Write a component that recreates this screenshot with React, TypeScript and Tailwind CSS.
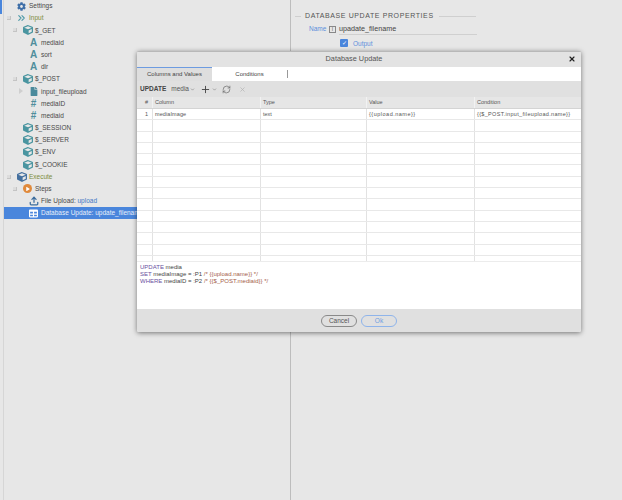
import { ChevronsRight, Plus, RefreshCw, X, ChevronDown } from "lucide-react";
import { FaCog, FaCube, FaFile, FaTable, FaPlay } from "react-icons/fa";
import { FiUpload } from "react-icons/fi";

type Row = {
  label: string;
  extra?: string;
  indent: number;
  icon: string;
  arrow?: "open" | "closed";
  color?: string;
  selected?: boolean;
};

const rows: Row[] = [
  { label: "Settings", indent: 12, icon: "cog" },
  { label: "Input", indent: 12, icon: "input", arrow: "open", color: "text-[#7d8c3c]" },
  { label: "$_GET", indent: 18, icon: "cube", arrow: "open" },
  { label: "mediaid", indent: 24, icon: "A" },
  { label: "sort", indent: 24, icon: "A" },
  { label: "dir", indent: 24, icon: "A" },
  { label: "$_POST", indent: 18, icon: "cube", arrow: "open" },
  { label: "input_fileupload", indent: 24, icon: "file", arrow: "closed" },
  { label: "mediaID", indent: 24, icon: "#" },
  { label: "mediaid", indent: 24, icon: "#" },
  { label: "$_SESSION", indent: 18, icon: "cube" },
  { label: "$_SERVER", indent: 18, icon: "cube" },
  { label: "$_ENV", indent: 18, icon: "cube" },
  { label: "$_COOKIE", indent: 18, icon: "cube" },
  { label: "Execute", indent: 12, icon: "exec", arrow: "open", color: "text-[#7d8c3c]" },
  { label: "Steps", indent: 18, icon: "steps", arrow: "open" },
  { label: "File Upload: ", extra: "upload", indent: 24, icon: "upload" },
  { label: "Database Update: update_filename", indent: 24, icon: "table", selected: true },
];

function RowIcon({ name, selected }: { name: string; selected?: boolean }) {
  if (name === "cog") return <FaCog className="w-[9px] h-[9px] text-[#3f6fa8]" />;
  if (name === "input") return <ChevronsRight className="w-[12px] h-[12px] text-[#4f9aa8]" strokeWidth={2.4} />;
  if (name === "cube") return <FaCube className="w-[10px] h-[10px] text-[#4a95a0]" />;
  if (name === "exec") return <FaCube className="w-[10px] h-[10px] text-[#44709f]" />;
  if (name === "A") return <span className="text-[10px] leading-none font-bold text-[#4f8e9c]">A</span>;
  if (name === "#") return <span className="text-[10px] leading-none font-bold text-[#4f8e9c]">#</span>;
  if (name === "file") return <FaFile className="w-[8px] h-[9px] text-[#4a8a9c]" />;
  if (name === "upload") return <FiUpload className="w-[10px] h-[10px] text-[#3d6e9e]" strokeWidth={3} />;
  if (name === "table") return <FaTable className={`w-[9px] h-[9px] ${selected ? "text-white" : "text-[#3d6e9e]"}`} />;
  return (
    <span className="w-[9px] h-[9px] rounded-full bg-[#e08a3c] flex items-center justify-center">
      <FaPlay className="w-[4px] h-[4px] text-white" />
    </span>
  );
}

function TreeRow({ row }: { row: Row }) {
  return (
    <div
      className={`h-[12.2px] flex items-center whitespace-nowrap overflow-hidden ${row.selected ? "bg-[#4a86dc] text-[#e8f0fb]" : "text-[#484848]"}`}
      style={{ paddingLeft: row.indent }}
    >
      <span className="w-[9px] -ml-[9px] -translate-x-[3px] flex justify-center shrink-0">
        {row.arrow === "open" && <span className="w-[4px] h-[4px] border-b border-r border-[#c4c4c4] bg-[#dcdcdc]" />}
        {row.arrow === "closed" && (
          <span className="w-0 h-0 border-y-[3px] border-y-transparent border-l-[4px] border-l-[#cfcfcf]" />
        )}
      </span>
      <span className="w-[11px] mr-[2px] shrink-0 flex items-center justify-center">
        <RowIcon name={row.icon} selected={row.selected} />
      </span>
      <span className={row.color}>{row.label}</span>
      {row.extra && <span className="text-[#3f78c4]">&nbsp;{row.extra}</span>}
    </div>
  );
}

const cols = ["w-[16px]", "w-[108px]", "w-[106px]", "w-[108px]", "flex-1"];
const tracking = ["", "tracking-[0.1px]", "", "tracking-[0.5px]", "tracking-[0.32px]"];

function GridRow({ cells }: { cells: string[] }) {
  return (
    <div className="h-[11.3px] flex border-b border-[#e8e8e8] bg-white">
      {cells.map((c, i) => (
        <div
          key={i}
          className={`${cols[i]} ${tracking[i]} border-r border-[#e2e2e2] last:border-r-0 flex items-center whitespace-nowrap overflow-hidden ${i === 0 ? "justify-end pr-[4px]" : "px-[2px]"}`}
        >
          {c}
        </div>
      ))}
    </div>
  );
}

function Dialog() {
  const empty = ["", "", "", "", ""];
  return (
    <div className="absolute left-[137px] top-[51px] w-[444px] h-[281px] flex flex-col bg-white rounded-[2px] border-t border-[#b8b8b8] shadow-[0_1px_5px_rgba(0,0,0,0.5)] text-[5.5px] text-[#555] overflow-hidden">
      <div className="h-[15px] bg-[#e3e3e3] relative flex items-center justify-center pr-[10px] text-[7.3px] text-[#555]">
        Database Update
        <X className="absolute right-[5px] top-[3px] w-[8px] h-[8px] text-[#222]" strokeWidth={3.5} />
      </div>
      <div className="h-[14px] flex items-center bg-white text-[6px] text-[#444]">
        <div className="w-[75px] h-full bg-[#dedede] border-t border-[#6d9be0] flex items-center justify-center">
          Columns and Values
        </div>
        <div className="w-[75px] h-full flex items-center justify-center">Conditions</div>
        <div className="w-px h-[8px] bg-[#999]" />
      </div>
      <div className="h-[16px] bg-[#e0e0e0] flex items-center pl-[3px] text-[#555]">
        <span className="font-bold text-[6.5px] text-[#444]">UPDATE</span>
        <span className="ml-[5px] text-[6.5px]">media</span>
        <ChevronDown className="w-[5px] h-[5px] ml-[1px]" />
        <Plus className="w-[11px] h-[11px] ml-[5px] text-[#444]" strokeWidth={2} />
        <ChevronDown className="w-[5px] h-[5px] ml-[1px]" />
        <RefreshCw className="w-[9px] h-[9px] ml-[5px] text-[#666]" strokeWidth={1.8} />
        <X className="w-[7px] h-[7px] ml-[8px] text-[#b5b5b5]" strokeWidth={2.5} />
      </div>
      <div className="h-[12px] flex bg-[#e6e6e6] border-b border-[#d4d4d4]">
        {["#", "Column", "Type", "Value", "Condition"].map((c, i) => (
          <div
            key={c}
            className={`${cols[i]} border-r border-[#f2f2f2] last:border-r-0 flex items-center ${i === 0 ? "justify-end pr-[4px]" : "px-[2px]"}`}
          >
            {c}
          </div>
        ))}
      </div>
      <div className="h-[152px] overflow-hidden bg-white">
        <GridRow cells={["1", "mediaImage", "text", "{{upload.name}}", "{{$_POST.input_fileupload.name}}"]} />
        {Array.from({ length: 13 }).map((_, i) => (
          <GridRow key={i} cells={empty} />
        ))}
      </div>
      <div className="h-[48px] bg-white px-[3px] pt-[2px] text-[6px] leading-[7px] text-[#444] border-t border-[#ececec]">
        <div><span className="text-[#6a4fa0]">UPDATE</span> media</div>
        <div>
          <span className="text-[#6a4fa0]">SET</span> mediaImage = :P1 <span className="text-[#a5614a]">/* {"{{upload.name}}"} */</span>
        </div>
        <div>
          <span className="text-[#6a4fa0]">WHERE</span> mediaID = :P2 <span className="text-[#a5614a]">/* {"{{$_POST.mediaid}}"} */</span>
        </div>
      </div>
      <div className="flex-1 bg-[#e0e0e0] flex items-center justify-center gap-[4px] text-[6.5px]">
        <div className="w-[36px] h-[12px] rounded-full border border-[#8a8a8a] flex items-center justify-center text-[#555]">Cancel</div>
        <div className="w-[36px] h-[12px] rounded-full border border-[#8fb4ea] flex items-center justify-center text-[#6f9de0]">Ok</div>
      </div>
    </div>
  );
}

export default function App() {
  return (
    <div className="relative w-[622px] h-[500px] overflow-hidden bg-[#e7e7e7] font-['Liberation_Sans',Arial,sans-serif] text-[6.5px] flex">
      <div className="w-[291px] h-full border-r border-[#bdbdbd] relative">
        <div className="absolute left-0 top-0 w-[2px] h-[14px] bg-[#4a86dc]" />
        <div className="ml-[3px] h-full border-l border-[#d6d6d6]">
          {rows.map((r, i) => (
            <TreeRow key={i} row={r} />
          ))}
        </div>
      </div>
      <div className="flex-1 pl-[4px] pt-[11px] text-[#555]">
        <div className="flex items-center">
          <span className="w-[6px] h-px bg-[#cfcfcf] mr-[4px]" />
          <span className="text-[7px] tracking-[0.6px] text-[#555]">DATABASE UPDATE PROPERTIES</span>
          <span className="w-[37px] h-px bg-[#cfcfcf] ml-[5px]" />
        </div>
        <div className="flex items-center mt-[2px] ml-[14px]">
          <span className="text-[#5d90dc] text-[6.5px] w-[20px]">Name</span>
          <span className="w-[7px] h-[7px] border border-[#888] text-[5px] leading-[5px] text-center mr-[3px]">I</span>
          <span className="w-[138px] border-b border-[#d0d0d0] text-[7.2px] leading-[10px] text-[#444]">upadate_filename</span>
        </div>
        <div className="flex items-center mt-[4px] ml-[45px] gap-[5px]">
          <span className="w-[8px] h-[8px] rounded-[1px] bg-[#4a86dc] text-white text-[6px] leading-[8px] text-center">✓</span>
          <span className="text-[#5d90dc] text-[6.5px]">Output</span>
        </div>
      </div>
      <Dialog />
    </div>
  );
}
